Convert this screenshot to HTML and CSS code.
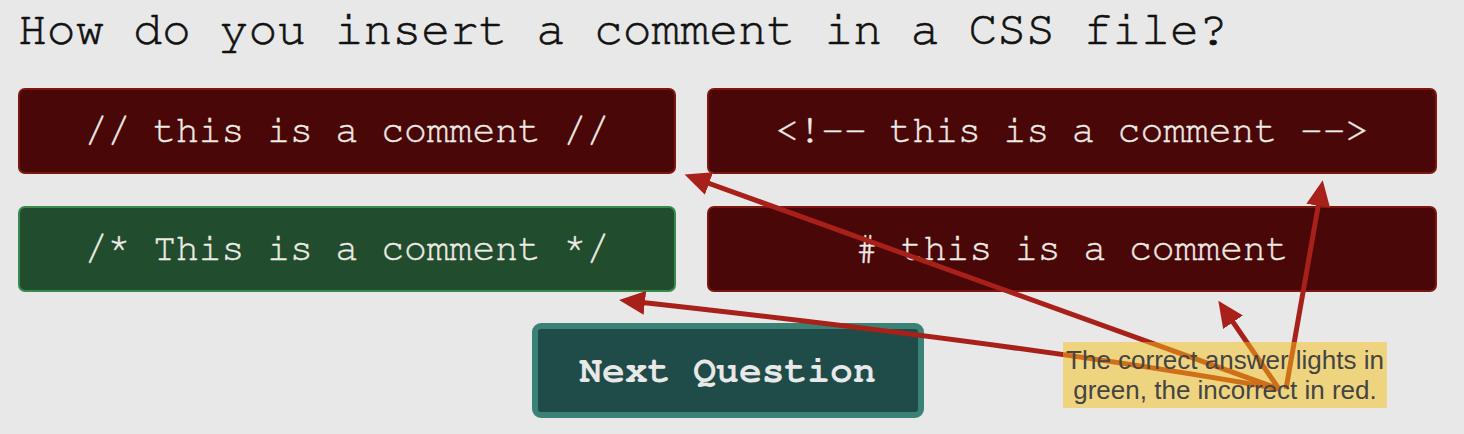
FILE: index.html
```html
<!DOCTYPE html>
<html lang="en">
<head>
<meta charset="utf-8">
<title>CSS Quiz</title>
<link rel="stylesheet" href="styles.css">
</head>
<body>
<main class="page">
  <h1 class="question">How do you insert a comment in a CSS file?</h1>
  <div class="answers">
    <div class="answer wrong">// this is a comment //</div>
    <div class="answer wrong">&lt;!-- this is a comment --&gt;</div>
    <div class="answer right">/* This is a comment */</div>
    <div class="answer wrong"># this is a comment</div>
  </div>
  <div class="actions">
    <button class="next">Next Question</button>
  </div>

  <svg class="arrows" width="1464" height="434" viewBox="0 0 1464 434" aria-hidden="true">
    <defs>
      <marker id="head" markerUnits="userSpaceOnUse" markerWidth="30" markerHeight="26" refX="16" refY="12" orient="auto">
        <path d="M0,0 L26,12 L0,24 Z" fill="#a8201a"/>
      </marker>
    </defs>
    <g fill="none" stroke="#a8201a" stroke-width="5" marker-end="url(#head)">
      <path d="M1279 389 L694 178"/>
      <path d="M1279 389 Q1040 346 629 301"/>
      <path d="M1279 389 L1224 309"/>
      <path d="M1286 389 L1321 190"/>
    </g>
  </svg>

  <div class="note">The correct answer lights in green, the incorrect in red.</div>
</main>
</body>
</html>
```

FILE: styles.css
```css
html, body {
  margin: 0;
  padding: 0;
  background: #e8e8e8;
}

.page {
  position: relative;
  width: 1464px;
  height: 434px;
  box-sizing: border-box;
  padding: 3px 0 0 18px;
  overflow: hidden;
}

.question {
  margin: 0;
  font-family: "Nimbus Mono PS", "Nimbus Mono L", "FreeMono", "Courier New", "Liberation Mono", monospace;
  font-size: 48px;
  font-weight: normal;
  line-height: 54px;
  color: #111;
  white-space: nowrap;
  -webkit-text-stroke: 0.6px #111;
}

.answers {
  margin-top: 31px;
  display: grid;
  grid-template-columns: 658px 730px;
  column-gap: 31px;
  row-gap: 32px;
}

.answer {
  box-sizing: border-box;
  height: 86px;
  border: 2px solid;
  border-radius: 7px;
  display: flex;
  align-items: center;
  justify-content: center;
  font-family: "Nimbus Mono PS", "Nimbus Mono L", "FreeMono", "Courier New", "Liberation Mono", monospace;
  font-size: 38px;
  color: #efebe6;
  white-space: pre;
  -webkit-text-stroke: 0.4px #efebe6;
}

.wrong {
  background: #4a0707;
  border-color: #7e1610;
}

.right {
  background: #214d2e;
  border-color: #3a8a50;
}

.actions {
  width: 1419px;
  margin-top: 31px;
  display: flex;
  justify-content: center;
}

.next {
  box-sizing: border-box;
  width: 392px;
  height: 95px;
  margin: 0;
  padding: 0;
  border: 6px solid #3b8176;
  border-radius: 9px;
  background: #1f4c48;
  font-family: "Nimbus Mono PS", "Nimbus Mono L", "FreeMono", "Courier New", "Liberation Mono", monospace;
  font-size: 38px;
  font-weight: bold;
  color: #e8e8e8;
  cursor: pointer;
}

.arrows {
  position: absolute;
  left: 0;
  top: 0;
  pointer-events: none;
}

.note {
  position: absolute;
  left: 1063px;
  top: 342px;
  width: 324px;
  height: 66px;
  box-sizing: border-box;
  padding-top: 3px;
  background: rgba(246, 192, 22, 0.5);
  font-family: "Liberation Sans", Arial, sans-serif;
  font-size: 26px;
  line-height: 30px;
  color: #444;
  text-align: center;
}
```
